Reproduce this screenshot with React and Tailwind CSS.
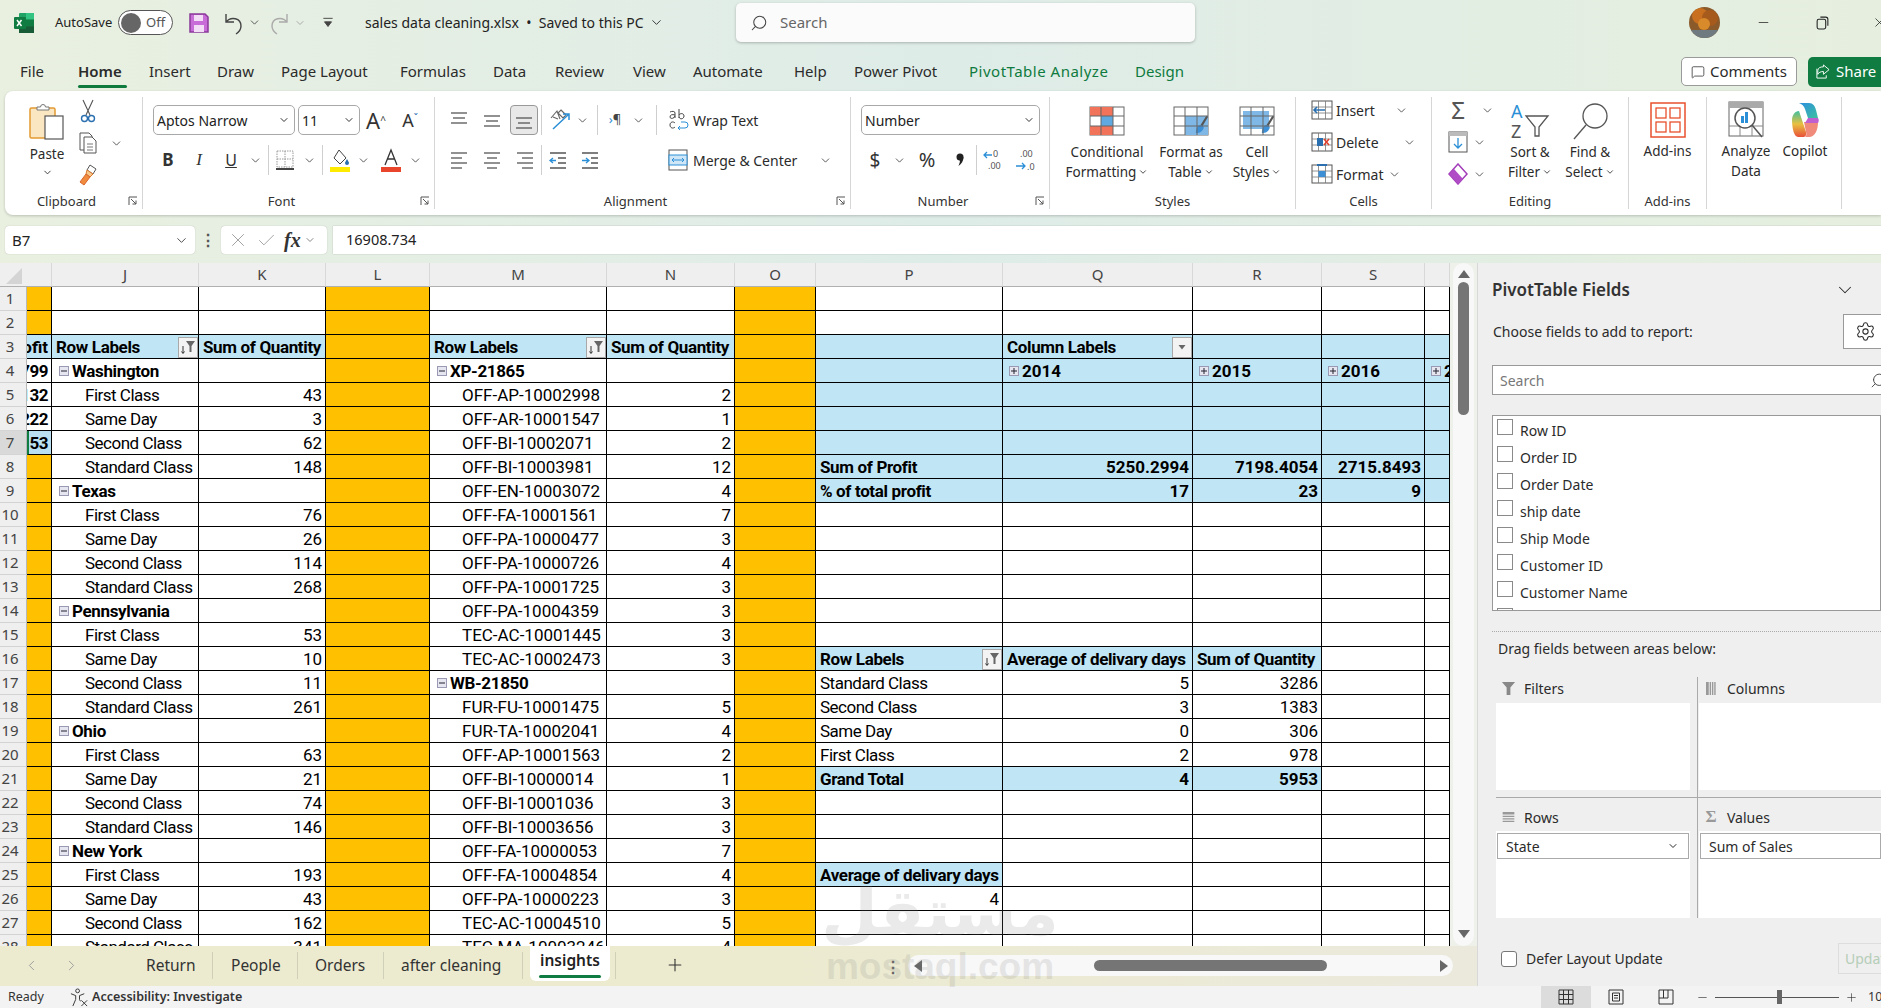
import {
  Check,
  ChevronDown,
  ChevronLeft,
  ChevronRight,
  Search,
  Settings,
  Minus,
  Plus,
  X,
  MessageSquare,
} from "lucide-react";

const sheetCols =
  "grid grid-cols-[27px_25px_147px_127px_104px_177px_128px_81px_187px_190px_129px_103px_25px]";
const headers = ["", "", "J", "K", "L", "M", "N", "O", "P", "Q", "R", "S", ""];

const BLUE = "bg-[#c0e6f5]";
const ORANGE = "bg-[#ffc000]";

const jk = {
  4: ["s", "Washington"],
  5: ["i", "First Class", 43],
  6: ["i", "Same Day", 3],
  7: ["i", "Second Class", 62],
  8: ["i", "Standard Class", 148],
  9: ["s", "Texas"],
  10: ["i", "First Class", 76],
  11: ["i", "Same Day", 26],
  12: ["i", "Second Class", 114],
  13: ["i", "Standard Class", 268],
  14: ["s", "Pennsylvania"],
  15: ["i", "First Class", 53],
  16: ["i", "Same Day", 10],
  17: ["i", "Second Class", 11],
  18: ["i", "Standard Class", 261],
  19: ["s", "Ohio"],
  20: ["i", "First Class", 63],
  21: ["i", "Same Day", 21],
  22: ["i", "Second Class", 74],
  23: ["i", "Standard Class", 146],
  24: ["s", "New York"],
  25: ["i", "First Class", 193],
  26: ["i", "Same Day", 43],
  27: ["i", "Second Class", 162],
  28: ["i", "Standard Class", 341],
};

const mn = {
  4: ["s", "XP-21865"],
  5: ["i", "OFF-AP-10002998", 2],
  6: ["i", "OFF-AR-10001547", 1],
  7: ["i", "OFF-BI-10002071", 2],
  8: ["i", "OFF-BI-10003981", 12],
  9: ["i", "OFF-EN-10003072", 4],
  10: ["i", "OFF-FA-10001561", 7],
  11: ["i", "OFF-PA-10000477", 3],
  12: ["i", "OFF-PA-10000726", 4],
  13: ["i", "OFF-PA-10001725", 3],
  14: ["i", "OFF-PA-10004359", 3],
  15: ["i", "TEC-AC-10001445", 3],
  16: ["i", "TEC-AC-10002473", 3],
  17: ["s", "WB-21850"],
  18: ["i", "FUR-FU-10001475", 5],
  19: ["i", "FUR-TA-10002041", 4],
  20: ["i", "OFF-AP-10001563", 2],
  21: ["i", "OFF-BI-10000014", 1],
  22: ["i", "OFF-BI-10001036", 3],
  23: ["i", "OFF-BI-10003656", 3],
  24: ["i", "OFF-FA-10000053", 7],
  25: ["i", "OFF-FA-10004854", 4],
  26: ["i", "OFF-PA-10000223", 3],
  27: ["i", "TEC-AC-10004510", 5],
  28: ["i", "TEC-MA-10003246", 4],
};

const shipTable = {
  17: ["Standard Class", 5, 3286],
  18: ["Second Class", 3, 1383],
  19: ["Same Day", 0, 306],
  20: ["First Class", 2, 978],
};

const Cell = ({ bg = "bg-white", bold, right, code, pl = "pl-[4px]", children, extra = "" }) => {
  const spacing = right || code ? "" : bold ? "tracking-[-0.35px]" : "tracking-[-0.5px]";
  return (
    <div
      className={`flex h-[24px] items-center overflow-hidden whitespace-nowrap border-r border-b border-black pt-[1px] text-[17px] leading-none ${bg} ${
        bold ? "font-bold" : ""
      } ${right ? "justify-end pr-[3px]" : pl} ${spacing} ${extra}`}
    >
      {children}
    </div>
  );
};

const Box = ({ plus }) => (
  <span className="mr-[3px] flex h-[10px] w-[10px] shrink-0 items-center justify-center border border-[#9a9ab4] bg-[#e6e6f0]">
    <svg viewBox="0 0 8 8" className="h-[8px] w-[8px]">
      <path d={plus ? "M1 4h6M4 1v6" : "M1 4h6"} stroke="#223" strokeWidth="1" />
    </svg>
  </span>
);

const FilterBtn = ({ sorted = true }) => (
  <span className="ml-auto flex h-[21px] w-[20px] shrink-0 items-center justify-center border border-[#a8a8a8] bg-[#f3f3f3]">
    {sorted ? (
      <svg viewBox="0 0 16 16" className="h-[16px] w-[16px]">
        <path d="M6 2h9l-3.500 5v6h-2V7z" fill="#666" />
        <path d="M3 7v7M1.500 12.500 3 14.500l1.500-2" stroke="#333" fill="none" />
      </svg>
    ) : (
      <svg viewBox="0 0 10 10" className="h-[10px] w-[10px]">
        <path d="M1.500 3h7L5 7.500z" fill="#666" />
      </svg>
    )}
  </span>
);

// only the right end of column I is on screen
const colI = (r) => {
  if (r === 3)
    return (
      <Cell bg={BLUE} bold right>
        ofit
      </Cell>
    );
  if (r === 4)
    return (
      <Cell bold right extra="tracking-[-0.5px]">
        799
      </Cell>
    );
  if (r === 5)
    return (
      <Cell bold right extra="tracking-[-0.5px]">
        132
      </Cell>
    );
  if (r === 6)
    return (
      <Cell bold right extra="tracking-[-0.5px]">
        222
      </Cell>
    );
  if (r === 7)
    return (
      <Cell bg="bg-[#b9dff0]" bold right extra="border-l-2 border-l-[#107c41] tracking-[-0.5px]">
        .53
      </Cell>
    );
  return <Cell bg={ORANGE} />;
};

const colJK = (r) => {
  if (r === 3)
    return [
      <Cell key="j" bg={BLUE} bold>
        Row Labels
        <FilterBtn />
      </Cell>,
      <Cell key="k" bg={BLUE} bold>
        Sum of Quantity
      </Cell>,
    ];
  const d = jk[r];
  if (!d) return [<Cell key="j" />, <Cell key="k" />];
  return [
    d[0] === "s" ? (
      <Cell key="j" bold pl="pl-[7px]">
        <Box />
        {d[1]}
      </Cell>
    ) : (
      <Cell key="j" pl="pl-[33px]">
        {d[1]}
      </Cell>
    ),
    <Cell key="k" right>
      {d[2]}
    </Cell>,
  ];
};

const colMN = (r) => {
  if (r === 3)
    return [
      <Cell key="m" bg={BLUE} bold>
        Row Labels
        <FilterBtn />
      </Cell>,
      <Cell key="n" bg={BLUE} bold>
        Sum of Quantity
      </Cell>,
    ];
  const d = mn[r];
  if (!d) return [<Cell key="m" />, <Cell key="n" />];
  return [
    d[0] === "s" ? (
      <Cell key="m" bold pl="pl-[7px]">
        <Box />
        {d[1]}
      </Cell>
    ) : (
      <Cell key="m" code pl="pl-[32px]">
        {d[1]}
      </Cell>
    ),
    <Cell key="n" right>
      {d[2]}
    </Cell>,
  ];
};

const colPT = (r) => {
  if (r === 3)
    return [
      <Cell key="p" bg={BLUE} />,
      <Cell key="q" bg={BLUE} bold>
        Column Labels
        <FilterBtn sorted={false} />
      </Cell>,
      <Cell key="r" bg={BLUE} />,
      <Cell key="s" bg={BLUE} />,
      <Cell key="t" bg={BLUE} />,
    ];
  if (r === 4)
    return [
      <Cell key="p" bg={BLUE} />,
      ...["2014", "2015", "2016", "2"].map((y) => (
        <Cell key={y} bg={BLUE} bold code pl="pl-[6px]">
          <Box plus />
          {y}
        </Cell>
      )),
    ];
  if (r >= 5 && r <= 7) return ["p", "q", "r", "s", "t"].map((k) => <Cell key={k} bg={BLUE} />);
  if (r === 8 || r === 9) {
    const vals = r === 8 ? ["5250.2994", "7198.4054", "2715.8493"] : [17, 23, 9];
    return [
      <Cell key="p" bg={BLUE} bold>
        {r === 8 ? "Sum of Profit" : "% of total profit"}
      </Cell>,
      ...vals.map((v, i) => (
        <Cell key={i} bg={BLUE} bold right>
          {v}
        </Cell>
      )),
      <Cell key="t" bg={BLUE} />,
    ];
  }
  if (r === 16)
    return [
      <Cell key="p" bg={BLUE} bold>
        Row Labels
        <FilterBtn />
      </Cell>,
      <Cell key="q" bg={BLUE} bold>
        Average of delivary days
      </Cell>,
      <Cell key="r" bg={BLUE} bold>
        Sum of Quantity
      </Cell>,
      <Cell key="s" />,
      <Cell key="t" />,
    ];
  if (shipTable[r]) {
    const d = shipTable[r];
    return [
      <Cell key="p">{d[0]}</Cell>,
      <Cell key="q" right>
        {d[1]}
      </Cell>,
      <Cell key="r" right>
        {d[2]}
      </Cell>,
      <Cell key="s" />,
      <Cell key="t" />,
    ];
  }
  if (r === 21)
    return [
      <Cell key="p" bg={BLUE} bold>
        Grand Total
      </Cell>,
      <Cell key="q" bg={BLUE} bold right>
        4
      </Cell>,
      <Cell key="r" bg={BLUE} bold right>
        5953
      </Cell>,
      <Cell key="s" />,
      <Cell key="t" />,
    ];
  if (r === 25)
    return [
      <Cell key="p" bg={BLUE} bold>
        Average of delivary days
      </Cell>,
      ...["q", "r", "s", "t"].map((k) => <Cell key={k} />),
    ];
  if (r === 26)
    return [
      <Cell key="p" right>
        4
      </Cell>,
      ...["q", "r", "s", "t"].map((k) => <Cell key={k} />),
    ];
  return ["p", "q", "r", "s", "t"].map((k) => <Cell key={k} />);
};

const Chev = ({ className = "" }) => (
  <ChevronDown size={13} strokeWidth={1.600} className={`shrink-0 text-[#444] ${className}`} />
);

const Slot = ({ w, children, className = "" }) => (
  <div className={`flex shrink-0 items-center justify-center ${w} ${className}`}>{children}</div>
);

const Lines = ({ rows, color = "#555" }) => (
  <svg viewBox="0 0 20 20" className="h-[20px] w-[20px]">
    {rows.map(([a, b, y], i) => (
      <path key={i} d={`M${a} ${y}H${b}`} stroke={color} strokeWidth="1.300" />
    ))}
  </svg>
);

const Launcher = () => (
  <svg viewBox="0 0 10 10" className="h-[10px] w-[10px] shrink-0">
    <path d="M1 9V1h8M3 3l5 5M8 4.500V8H4.500" stroke="#555" fill="none" strokeWidth="1" />
  </svg>
);

const Group = ({ w, label, launcher, children }) => (
  <div className={`flex h-[112px] shrink-0 flex-col border-r border-[#d6d6d6] ${w}`}>
    <div className="h-[96px] shrink-0">{children}</div>
    <div className="flex h-[16px] shrink-0 items-center">
      <div className="flex-1 text-center text-[13px] leading-[16px] text-[#333]">{label}</div>
      {launcher && (
        <div className="mr-[4px]">
          <Launcher />
        </div>
      )}
    </div>
  </div>
);

const Select = ({ w, children, className = "" }) => (
  <div
    className={`flex h-[30px] shrink-0 items-center justify-between rounded-[5px] border border-[#a8a8a8] bg-white pr-[4px] pl-[3px] text-[14px] text-[#222] ${w} ${className}`}
  >
    {children}
    <ChevronDown size={12} strokeWidth={2} className="text-[#333]" />
  </div>
);

const Sep = ({ className = "" }) => <div className={`h-[30px] w-px shrink-0 bg-[#cfcfcf] ${className}`} />;

const ExcelLogo = () => (
  <svg viewBox="0 0 22 22" className="h-[22px] w-[22px]">
    <rect x="6" y="1" width="15" height="20" rx="1" fill="#21a366" />
    <rect x="13" y="1" width="8" height="6.600" fill="#33c481" />
    <rect x="13" y="7.600" width="8" height="6.600" fill="#107c41" />
    <rect x="6" y="14.200" width="15" height="6.800" fill="#185c37" />
    <rect x="1" y="5" width="12" height="12" rx="1" fill="#107c41" />
    <path d="M4 8l4.500 6M8.500 8 4 14" stroke="#fff" strokeWidth="1.500" />
  </svg>
);

const PasteIcon = () => (
  <svg viewBox="0 0 36 38" className="h-[38px] w-[36px]">
    <rect x="1" y="6" width="25" height="30" rx="1.500" fill="#fbe6c2" stroke="#e39a32" strokeWidth="1.500" />
    <path d="M8 8V5h3.500a2.500 2.500 0 0 1 5 0H20v3z" fill="#fff" stroke="#777" />
    <rect x="16" y="14" width="18" height="23" fill="#fff" stroke="#555" strokeWidth="1.200" />
  </svg>
);

const GridIcon = ({ children }) => (
  <svg viewBox="0 0 36 30" className="h-[30px] w-[36px]">
    <rect x="1" y="1" width="34" height="28" fill="#fff" stroke="#666" />
    {children}
    <path d="M12 1v28M24 1v28M1 10h34M1 20h34" stroke="#666" />
  </svg>
);

const Brush = () => (
  <svg viewBox="0 0 16 22" x="22" y="8" width="14" height="22">
    <path d="M14 1 6 14" stroke="#555" strokeWidth="2.500" />
    <path d="M7 11c-4 0-6 4-6 9 5 1 9-3 9-7z" fill="#3d8fd6" />
  </svg>
);

const SmallGrid = ({ children }) => (
  <svg viewBox="0 0 22 20" className="h-[20px] w-[22px]">
    <rect x="1" y="1" width="20" height="18" fill="#fff" stroke="#555" />
    <path d="M7.500 1v18M14.500 1v18M1 7h20M1 13h20" stroke="#777" strokeWidth=".8" />
    {children}
  </svg>
);

const TitleBar = () => (
  <div className="flex h-[50px] items-center pb-[5px] text-[#222]">
    <div className="ml-[13px] w-[42px] shrink-0">
      <ExcelLogo />
    </div>
    <div className="w-[63px] shrink-0 text-[13px]">AutoSave</div>
    <div className="flex h-[25px] w-[55px] shrink-0 items-center rounded-full border border-[#555] bg-white pl-[2px]">
      <span className="h-[20px] w-[20px] rounded-full bg-[#666]" />
      <span className="ml-[5px] text-[13px] text-[#555]">Off</span>
    </div>
    <svg viewBox="0 0 22 22" className="ml-[15px] h-[22px] w-[22px] shrink-0">
      <path d="M2 2h15l3 3v15H2z" fill="#c86dd7" stroke="#8a3a9a" strokeWidth="1.500" />
      <rect x="6" y="3" width="9" height="6" fill="#f2dcf6" />
      <rect x="6" y="13" width="10" height="7" fill="#f2dcf6" />
    </svg>
    <svg viewBox="0 0 22 24" className="ml-[13px] h-[24px] w-[22px] shrink-0">
      <path d="M3 3v8h8M3 11c5-6 15-4 15 4 0 3-2 6-5 8" stroke="#444" fill="none" strokeWidth="1.400" />
    </svg>
    <Chev className="ml-[3px]" />
    <svg viewBox="0 0 22 24" className="ml-[7px] h-[24px] w-[22px] shrink-0">
      <path d="M19 3v8h-8M19 11C14 5 4 7 4 15c0 3 2 6 5 8" stroke="#aaa" fill="none" strokeWidth="1.400" />
    </svg>
    <ChevronDown size={12} className="ml-[4px] shrink-0 text-[#aaa]" />
    <svg viewBox="0 0 12 12" className="ml-[15px] h-[14px] w-[14px] shrink-0">
      <path d="M2 2h8M3 5h6l-3 4z" stroke="#444" fill="#444" strokeWidth=".8" />
    </svg>
    <div className="ml-[30px] flex w-[371px] shrink-0 items-center text-[14px]">
      sales data cleaning.xlsx &nbsp;•&nbsp; Saved to this PC
      <ChevronDown size={15} strokeWidth={1.400} className="ml-[5px]" />
    </div>
    <div className="flex h-[39px] w-[459px] shrink-0 items-center rounded-[5px] bg-[#fbfbfb] pl-[14px] text-[15px] text-[#666] shadow-[0_1px_3px_rgba(0,0,0,0.25)]">
      <Search size={18} strokeWidth={1.400} className="-scale-x-100 text-[#444]" />
      <span className="ml-[12px]">Search</span>
    </div>
    <div className="ml-[494px] flex h-[31px] w-[31px] shrink-0 items-center justify-center overflow-hidden rounded-full">
      <svg viewBox="0 0 31 31" className="h-[31px] w-[31px]">
        <rect width="31" height="31" fill="#8a5a2a" />
        <circle cx="11" cy="9" r="8" fill="#c8701f" />
        <circle cx="21" cy="11" r="8" fill="#a65a1c" />
        <circle cx="15" cy="17" r="6" fill="#d98a2b" />
        <rect y="23" width="31" height="8" fill="#6f7a80" />
      </svg>
    </div>
    <Minus size={15} strokeWidth={1.200} className="ml-[36px] shrink-0 text-[#222]" />
    <svg viewBox="0 0 14 14" className="ml-[44px] h-[15px] w-[15px] shrink-0">
      <rect x="2" y="4" width="8" height="9" rx="1.500" fill="none" stroke="#222" />
      <path d="M5 2h5a2 2 0 0 1 2 2v6" fill="none" stroke="#222" />
    </svg>
    <X size={15} strokeWidth={1.200} className="ml-[42px] shrink-0 text-[#222]" />
  </div>
);

const menu = [
  ["File", "w-[58px]"],
  ["Home", "w-[71px] font-semibold"],
  ["Insert", "w-[68px]"],
  ["Draw", "w-[64px]"],
  ["Page Layout", "w-[119px]"],
  ["Formulas", "w-[93px]"],
  ["Data", "w-[62px]"],
  ["Review", "w-[78px]"],
  ["View", "w-[60px]"],
  ["Automate", "w-[101px]"],
  ["Help", "w-[60px]"],
  ["Power Pivot", "w-[115px]"],
  ["PivotTable Analyze", "w-[166px] text-[#0e7a3e] tracking-[0.5px]"],
  ["Design", "w-[60px] text-[#0e7a3e]"],
];

const MenuBar = () => (
  <div className="flex h-[41px] items-center pt-[2px] text-[15px] text-[#2b2b2b]">
    <div className="ml-[20px] flex shrink-0">
      {menu.map(([t, c]) => (
        <div key={t} className={`relative whitespace-nowrap ${c}`}>
          {t}
          {t === "Home" && (
            <span className="absolute top-[25px] left-0 h-[3px] w-[49px] rounded-full bg-[#0e7a3e]" />
          )}
        </div>
      ))}
    </div>
    <div className="ml-[486px] flex h-[29px] w-[116px] shrink-0 items-center justify-center gap-[5px] rounded-[5px] border border-[#9a9a9a] bg-white text-[15px]">
      <MessageSquare size={14} strokeWidth={1.300} />
      Comments
    </div>
    <div className="ml-[11px] flex h-[30px] w-[80px] shrink-0 items-center gap-[6px] rounded-[5px] bg-[#107c41] pl-[7px] text-[15px] text-white">
      <svg viewBox="0 0 16 16" className="h-[15px] w-[15px]">
        <path d="M9 1l6 5-6 5V8C6 8 4 9 3 11V7c0-3 3-4 6-4zM2 5v10h10v-3" fill="none" stroke="#fff" />
      </svg>
      Share
    </div>
  </div>
);

const RibbonBtn = ({ w, icon, lines, ml = "" }) => (
  <div className={`flex shrink-0 flex-col items-center ${w} ${ml}`}>
    <div className="flex h-[38px] items-center">{icon}</div>
    <div className="mt-[2px] text-center text-[13.500px] leading-[20px] whitespace-nowrap text-[#2b2b2b]">
      {lines.map((l, i) => (
        <div key={i} className="flex items-center justify-center gap-[2px]">
          {l}
          {l.endsWith(" ") && <ChevronDown size={10} strokeWidth={2} />}
        </div>
      ))}
    </div>
  </div>
);

const Ribbon = () => (
  <div className="ml-[5px] flex h-[124px] rounded-l-[8px] bg-white pt-[6px] shadow-[0_1px_3px_rgba(0,0,0,0.2)]">
    <Group w="w-[138px]" label="Clipboard" launcher>
      <div className="flex pt-[5px]">
        <div className="ml-[13px] flex w-[58px] flex-col items-center">
          <PasteIcon />
          <div className="mt-[4px] text-[13.500px] leading-[20px] text-[#2b2b2b]">Paste</div>
          <ChevronDown size={11} strokeWidth={2} className="mt-[3px] text-[#333]" />
        </div>
        <div className="-mt-[4px] flex flex-col gap-[6px]">
          <Slot w="w-[24px] h-[26px]">
            <svg viewBox="0 0 16 24" className="h-[24px] w-[16px]">
              <path d="M3 1l7 15M13 1 6 16" stroke="#555" strokeWidth="1.100" fill="none" />
              <circle cx="4.500" cy="19.500" r="3" fill="none" stroke="#2a6fb0" strokeWidth="1.400" />
              <circle cx="11.500" cy="19.500" r="3" fill="none" stroke="#2a6fb0" strokeWidth="1.400" />
            </svg>
          </Slot>
          <div className="flex h-[26px] items-center">
            <Slot w="w-[24px]">
              <svg viewBox="0 0 18 22" className="h-[22px] w-[18px]">
                <path d="M1 1h9l3 3v14H1z" fill="#fff" stroke="#555" />
                <path d="M5 5h8l4 4v12H5z" fill="#fff" stroke="#555" />
                <path d="M8 12h6M8 15h6M8 18h6" stroke="#777" />
              </svg>
            </Slot>
            <Chev className="ml-[10px]" />
          </div>
          <Slot w="w-[24px] h-[26px]">
            <svg viewBox="0 0 20 24" className="h-[24px] w-[20px]">
              <path d="M12 2l6 4-3 5-6-4z" fill="#fff" stroke="#555" />
              <path d="M9 7l6 4-3 3-4-3z" fill="#f5c78a" stroke="#d97a2b" />
              <path d="M8 11l4 3-6 8-4-3z" fill="#f08a3c" stroke="#d9662b" />
            </svg>
          </Slot>
        </div>
      </div>
    </Group>

    <Group w="w-[292px]" label="Font" launcher>
      <div className="flex items-center pt-[8px]">
        <Select w="w-[142px]" className="ml-[10px]">
          Aptos Narrow
        </Select>
        <Select w="w-[62px]" className="ml-[3px]">
          11
        </Select>
        <Slot w="w-[32px]">
          <span className="text-[22px] leading-none text-[#333]">
            A<sup className="text-[10px] text-[#333]">^</sup>
          </span>
        </Slot>
        <Slot w="w-[32px]" className="ml-[2px]">
          <span className="text-[18px] leading-none text-[#333]">
            A<sup className="text-[10px] text-[#2a6fb0]">ˇ</sup>
          </span>
        </Slot>
      </div>
      <div className="mt-[10px] flex h-[30px] items-center text-[#333]">
        <Slot w="w-[30px] ml-[10px] font-bold text-[17px]">B</Slot>
        <Slot w="w-[32px] italic text-[17px] font-['Liberation_Serif',serif]">I</Slot>
        <Slot w="w-[32px] underline text-[16px]">U</Slot>
        <Slot w="w-[16px]">
          <Chev />
        </Slot>
        <Sep className="ml-[5px]" />
        <Slot w="w-[32px]">
          <svg viewBox="0 0 20 22" className="h-[22px] w-[20px]">
            <path d="M2 2h16v16H2zM10 2v16M2 10h16" fill="none" stroke="#999" strokeDasharray="1.500 1" />
            <path d="M1 20h18" stroke="#444" strokeWidth="2" />
          </svg>
        </Slot>
        <Slot w="w-[16px]">
          <Chev />
        </Slot>
        <Sep className="ml-[5px]" />
        <Slot w="w-[34px]">
          <svg viewBox="0 0 22 24" className="h-[24px] w-[22px]">
            <path d="M10 2l7 8-6 6-6-6z" fill="#fff" stroke="#444" />
            <path d="M18 11c1 2 2 3 2 4a2 2 0 0 1-4 0c0-1 1-2 2-4z" fill="#2a6fb0" />
            <rect x="1" y="19" width="20" height="5" fill="#ffeb00" />
          </svg>
        </Slot>
        <Slot w="w-[12px]">
          <Chev />
        </Slot>
        <Slot w="w-[36px] ml-[4px]">
          <svg viewBox="0 0 22 24" className="h-[24px] w-[22px]">
            <path d="M5 17 11 2l6 15M7.500 11h7" stroke="#333" fill="none" strokeWidth="1.300" />
            <rect x="1" y="19" width="20" height="5" fill="#e8452c" />
          </svg>
        </Slot>
        <Slot w="w-[12px]">
          <Chev />
        </Slot>
      </div>
    </Group>

    <Group w="w-[416px]" label="Alignment" launcher>
      <div className="mt-[8px] flex h-[30px] items-center">
        <Slot w="w-[32px] ml-[8px]">
          <Lines rows={[[2, 18, 3], [4, 16, 8], [2, 18, 13]]} />
        </Slot>
        <Slot w="w-[33px]">
          <Lines rows={[[2, 18, 6], [4, 16, 11], [2, 18, 16]]} />
        </Slot>
        <Slot w="w-[28px] h-[30px] ml-[2px] rounded-[4px] border border-[#999] bg-[#e8e8e8]">
          <Lines rows={[[2, 18, 8], [4, 16, 13], [2, 18, 18]]} />
        </Slot>
        <Sep className="ml-[3px]" />
        <Slot w="w-[36px]">
          <svg viewBox="0 0 24 24" className="h-[24px] w-[24px]">
            <path d="M3 10 9 3l3 8M5 9l5 2M13 2l5 5-3 3-5-5z" stroke="#666" fill="none" strokeWidth="1.100" />
            <path d="M5 21 21 6M15 6h6v6" stroke="#2a8fd6" fill="none" strokeWidth="1.500" />
          </svg>
        </Slot>
        <Slot w="w-[8px]">
          <Chev />
        </Slot>
        <Sep className="ml-[11px]" />
        <Slot w="w-[34px] text-[13px] text-[#444]">
          <span className="text-[#2a8fd6]">›</span>¶
        </Slot>
        <Slot w="w-[12px]">
          <Chev />
        </Slot>
        <Sep className="ml-[12px]" />
        <Slot w="w-[28px] ml-[7px]">
          <svg viewBox="0 0 22 24" className="h-[24px] w-[22px]">
            <path d="M3 4c2-1 5-1 5 1v5M8 7C5 6 3 7 3 9s4 2 5-1M12 1v9M12 7c1-2 5-2 5 1s-4 4-5 1M8 15c-2-2-5-1-5 2s3 4 5 2" stroke="#444" fill="none" />
            <path d="M11 20h7a2.500 2.500 0 0 0 0-6h-4M13 18l-2 2 2 2" stroke="#2a8fd6" fill="none" />
          </svg>
        </Slot>
        <span className="ml-[1px] shrink-0 text-[14px] text-[#2b2b2b]">Wrap Text</span>
      </div>
      <div className="mt-[10px] flex h-[30px] items-center">
        <Slot w="w-[32px] ml-[8px]">
          <Lines rows={[[2, 18, 3], [2, 13, 8], [2, 18, 13], [2, 13, 18]]} />
        </Slot>
        <Slot w="w-[33px]">
          <Lines rows={[[2, 18, 3], [5, 15, 8], [2, 18, 13], [5, 15, 18]]} />
        </Slot>
        <Slot w="w-[33px]">
          <Lines rows={[[2, 18, 3], [7, 18, 8], [2, 18, 13], [7, 18, 18]]} />
        </Slot>
        <Sep />
        <Slot w="w-[32px]">
          <svg viewBox="0 0 20 20" className="h-[20px] w-[20px]">
            <path d="M2 3h16M10 8h8M10 13h8M2 18h16" stroke="#555" strokeWidth="1.300" />
            <path d="M8 10.500H2M5 8l-3 2.500L5 13" stroke="#2a8fd6" fill="none" strokeWidth="1.300" />
          </svg>
        </Slot>
        <Slot w="w-[32px]">
          <svg viewBox="0 0 20 20" className="h-[20px] w-[20px]">
            <path d="M2 3h16M11 8h7M11 13h7M2 18h16" stroke="#555" strokeWidth="1.300" />
            <path d="M2 10.500h7M6 8l3 2.500L6 13" stroke="#2a8fd6" fill="none" strokeWidth="1.300" />
          </svg>
        </Slot>
        <Slot w="w-[25px] ml-[59px]">
          <svg viewBox="0 0 20 22" className="h-[22px] w-[20px]">
            <rect x="1" y="1" width="18" height="20" fill="#fff" stroke="#555" />
            <rect x="1" y="6" width="18" height="10" fill="#cfe6f7" stroke="#2a8fd6" />
            <path d="M4 11h12M6 9l-2 2 2 2M14 9l2 2-2 2" stroke="#2a8fd6" fill="none" />
          </svg>
        </Slot>
        <span className="ml-[3px] w-[120px] shrink-0 text-[14px] text-[#2b2b2b]">Merge &amp; Center</span>
        <Slot w="w-[24px]">
          <Chev />
        </Slot>
      </div>
    </Group>

    <Group w="w-[199px]" label="Number" launcher>
      <div className="pt-[8px]">
        <Select w="w-[179px]" className="ml-[10px]">
          Number
        </Select>
      </div>
      <div className="mt-[10px] flex h-[30px] items-center text-[#333]">
        <Slot w="w-[32px] ml-[8px] text-[19px]">$</Slot>
        <Slot w="w-[16px]">
          <Chev />
        </Slot>
        <Slot w="w-[40px] text-[20px]">%</Slot>
        <Slot w="w-[26px]">
          <svg viewBox="0 0 8 14" className="h-[14px] w-[8px]">
            <circle cx="4" cy="4" r="3.500" fill="#222" />
            <path d="M7.500 4c0 4-2 7-5 9 1-3 2-5 1-6z" fill="#222" />
          </svg>
        </Slot>
        <Sep className="ml-[3px]" />
        <Slot w="w-[32px]">
          <svg viewBox="0 0 24 24" className="h-[24px] w-[24px]">
            <text x="12" y="9" fontSize="9" fill="#555" fontFamily="Noto Sans">
              0
            </text>
            <text x="7" y="21" fontSize="9" fill="#555" fontFamily="Noto Sans">
              .00
            </text>
            <path d="M11 7H3M6 4 3 7l3 3" stroke="#2a8fd6" fill="none" strokeWidth="1.300" />
          </svg>
        </Slot>
        <Slot w="w-[32px]">
          <svg viewBox="0 0 24 24" className="h-[24px] w-[24px]">
            <text x="7" y="9" fontSize="9" fill="#555" fontFamily="Noto Sans">
              .00
            </text>
            <text x="14" y="22" fontSize="9" fill="#555" fontFamily="Noto Sans">
              .0
            </text>
            <path d="M3 18h9M9 15l3 3-3 3" stroke="#2a8fd6" fill="none" strokeWidth="1.300" />
          </svg>
        </Slot>
      </div>
    </Group>

    <Group w="w-[246px]" label="Styles">
      <div className="flex pt-[5px]">
        <RibbonBtn
          w="w-[108px]"
          ml="ml-[3px]"
          lines={["Conditional", "Formatting "]}
          icon={
            <GridIcon>
              <rect x="1" y="1" width="23" height="9" fill="#f0735a" />
              <rect x="12" y="10" width="12" height="10" fill="#5fa8e0" />
              <rect x="1" y="20" width="23" height="9" fill="#f0735a" />
            </GridIcon>
          }
        />
        <RibbonBtn
          w="w-[60px]"
          lines={["Format as", "Table "]}
          icon={
            <GridIcon>
              <rect x="12" y="10" width="23" height="19" fill="#7fb8e6" />
              <Brush />
            </GridIcon>
          }
        />
        <RibbonBtn
          w="w-[72px]"
          lines={["Cell", "Styles "]}
          icon={
            <GridIcon>
              <rect x="4" y="5" width="26" height="18" fill="#7fb8e6" />
              <Brush />
            </GridIcon>
          }
        />
      </div>
    </Group>

    <Group w="w-[136px]" label="Cells">
      <div className="-mt-[3px] text-[14px] text-[#2b2b2b]">
        <div className="flex h-[32px] items-center">
          <Slot w="w-[24px] ml-[14px]">
            <SmallGrid>
              <path d="M14 10H3M6 7l-3 3 3 3" stroke="#2a6fb0" fill="none" strokeWidth="1.600" />
            </SmallGrid>
          </Slot>
          <span className="ml-[2px] w-[59px] shrink-0">Insert</span>
          <Chev />
        </div>
        <div className="flex h-[32px] items-center">
          <Slot w="w-[24px] ml-[14px]">
            <SmallGrid>
              <rect x="6" y="6" width="6" height="8" fill="#2a6fb0" />
              <path d="M13 7l5 6M18 7l-5 6" stroke="#e0402c" strokeWidth="1.500" />
            </SmallGrid>
          </Slot>
          <span className="ml-[2px] w-[67px] shrink-0">Delete</span>
          <Chev />
        </div>
        <div className="flex h-[32px] items-center">
          <Slot w="w-[24px] ml-[14px]">
            <SmallGrid>
              <rect x="7.500" y="7" width="7" height="6" fill="#3d8fd6" />
              <path d="M6 1h10" stroke="#2a6fb0" strokeWidth="2" />
            </SmallGrid>
          </Slot>
          <span className="ml-[2px] w-[52px] shrink-0">Format</span>
          <Chev />
        </div>
      </div>
    </Group>

    <Group w="w-[197px]" label="Editing">
      <div className="flex">
        <div className="-mt-[3px] w-[68px] shrink-0">
          <div className="flex h-[32px] items-center">
            <Slot w="w-[26px] ml-[13px] text-[24px] leading-none text-[#555]">Σ</Slot>
            <Chev className="ml-[10px]" />
          </div>
          <div className="flex h-[32px] items-center">
            <Slot w="w-[26px] ml-[13px]">
              <svg viewBox="0 0 20 22" className="h-[22px] w-[20px]">
                <rect x="1" y="1" width="18" height="20" fill="#fff" stroke="#555" />
                <rect x="1" y="1" width="18" height="4" fill="#bbb" />
                <path d="M10 7v10M6 13l4 4 4-4" stroke="#2a8fd6" fill="none" strokeWidth="1.300" />
              </svg>
            </Slot>
            <Chev className="ml-[2px]" />
          </div>
          <div className="flex h-[32px] items-center">
            <Slot w="w-[26px] ml-[13px]">
              <svg viewBox="0 0 20 22" className="h-[22px] w-[20px]">
                <path d="M10 1l9 10-9 10-9-10z" fill="#fff" stroke="#a23cb8" strokeWidth="1.500" />
                <path d="M1 11l5-5 9 10-5 5z" fill="#b04cc6" />
              </svg>
            </Slot>
            <Chev className="ml-[2px]" />
          </div>
        </div>
        <div className="flex pt-[5px]">
          <RibbonBtn
            w="w-[60px]"
            lines={["Sort &", "Filter "]}
            icon={
              <svg viewBox="0 0 40 38" className="h-[38px] w-[40px]">
                <text x="1" y="16" fontSize="18" fill="#2a8fd6" fontFamily="Noto Sans">
                  A
                </text>
                <text x="1" y="36" fontSize="18" fill="#555" fontFamily="Noto Sans">
                  Z
                </text>
                <path d="M16 14h22l-9 11v9h-4V25z" fill="#fff" stroke="#555" strokeWidth="1.300" />
              </svg>
            }
          />
          <RibbonBtn
            w="w-[60px]"
            lines={["Find &", "Select "]}
            icon={
              <svg viewBox="0 0 38 38" className="h-[38px] w-[38px]">
                <circle cx="24" cy="14" r="12" fill="#fff" stroke="#555" strokeWidth="1.300" />
                <path d="M15 23 3 37" stroke="#555" strokeWidth="1.300" />
              </svg>
            }
          />
        </div>
      </div>
    </Group>

    <Group w="w-[78px]" label="Add-ins">
      <div className="flex justify-center pt-[4px]">
        <RibbonBtn
          w="w-[70px]"
          lines={["Add-ins"]}
          icon={
            <svg viewBox="0 0 36 36" className="h-[36px] w-[36px]">
              <rect x="1" y="1" width="34" height="34" fill="#fff" stroke="#e8502f" strokeWidth="1.500" />
              <rect x="6" y="6" width="10" height="10" fill="none" stroke="#e8502f" strokeWidth="1.300" />
              <rect x="20" y="6" width="10" height="10" fill="none" stroke="#e8502f" strokeWidth="1.300" />
              <rect x="6" y="20" width="10" height="10" fill="none" stroke="#e8502f" strokeWidth="1.300" />
              <rect x="20" y="20" width="10" height="10" fill="none" stroke="#e8502f" strokeWidth="1.300" />
            </svg>
          }
        />
      </div>
    </Group>

    <Group w="w-[135px]" label="">
      <div className="flex pt-[4px]">
        <RibbonBtn
          w="w-[62px]"
          ml="ml-[8px]"
          lines={["Analyze", "Data"]}
          icon={
            <svg viewBox="0 0 36 38" className="h-[38px] w-[36px]">
              <rect x="1" y="1" width="34" height="34" fill="#fff" stroke="#666" />
              <rect x="1" y="1" width="34" height="6" fill="#aaa" />
              <path d="M1 25h34M12 25v10M24 25v10" stroke="#888" />
              <circle cx="17" cy="17" r="10" fill="#fff" stroke="#555" strokeWidth="1.500" />
              <rect x="13" y="15" width="3" height="7" fill="#2a8fd6" />
              <rect x="17" y="11" width="3" height="11" fill="#2a8fd6" />
              <path d="M24 24l10 12" stroke="#555" strokeWidth="1.500" />
            </svg>
          }
        />
        <RibbonBtn
          w="w-[56px]"
          lines={["Copilot"]}
          icon={
            <svg viewBox="0 0 30 36" className="h-[36px] w-[30px]">
              <defs>
                <linearGradient id="cpa" x1="0" y1="0" x2="1" y2="1">
                  <stop offset="0" stopColor="#2a8fe0" />
                  <stop offset="1" stopColor="#3fc0a0" />
                </linearGradient>
                <linearGradient id="cpb" x1="0" y1="0" x2="0" y2="1">
                  <stop offset="0" stopColor="#3fc0a0" />
                  <stop offset=".5" stopColor="#e8c040" />
                  <stop offset="1" stopColor="#e8503a" />
                </linearGradient>
              </defs>
              <path d="M9 1h10c4 0 6 3 7 7l2 8H18l-3-9c-1-3-3-5-6-6z" fill="url(#cpa)" />
              <path d="M2 18c0-5 3-9 7-9l4 12 3 9c1 3-1 5-3 5H8c-4 0-6-9-6-17z" fill="url(#cpb)" />
              <path d="M14 20h14c0 8-3 15-9 15h-5c2 0 3-2 2-5z" fill="#f08a7a" />
              <path d="M18 16h10c1 2 1 3 0 5H15z" fill="#c060d0" />
            </svg>
          }
        />
      </div>
    </Group>
  </div>
);

const FormulaBar = () => (
  <div className="mt-[11px] flex h-[28px] items-stretch text-[#222]">
    <div className="ml-[5px] flex w-[190px] items-center justify-between rounded-[4px] bg-white pr-[6px] pl-[7px] text-[15px] shadow-[0_0_1px_rgba(0,0,0,0.3)]">
      B7
      <ChevronDown size={15} strokeWidth={1.500} className="text-[#444]" />
    </div>
    <div className="flex w-[26px] items-center justify-center text-[16px] font-bold text-[#555]">⋮</div>
    <div className="flex w-[106px] items-center rounded-[4px] bg-white pl-[6px] shadow-[0_0_1px_rgba(0,0,0,0.3)]">
      <X size={22} strokeWidth={1} className="mr-[7px] text-[#999]" />
      <Check size={21} strokeWidth={1} className="mr-[7px] text-[#999]" />
      <span className="font-['Liberation_Serif',serif] text-[20px] font-bold text-[#333] italic">fx</span>
      <ChevronDown size={12} className="ml-[3px] text-[#888]" />
    </div>
    <div className="ml-[6px] flex flex-1 items-center bg-white pl-[13px] text-[14.500px] shadow-[0_0_1px_rgba(0,0,0,0.3)]">
      16908.734
    </div>
  </div>
);

const Sheet = () => (
  <div className="h-[683px] w-[1450px] shrink-0 overflow-hidden font-['Roboto',sans-serif] text-black">
    <div className={`${sheetCols} h-[24px]`}>
      {headers.map((h, i) => (
        <div
          key={i}
          className={`flex h-[24px] items-center justify-center border-b border-[#b0b0b0] bg-[#efefef] font-['Noto_Sans',sans-serif] text-[15px] text-[#444] ${
            i === 0 ? "" : "border-r border-r-[#d8d8d8]"
          }`}
        >
          {i === 0 ? (
            <svg viewBox="0 0 16 16" className="mt-[2px] h-[16px] w-[16px]">
              <path d="M16 0v16H0z" fill="#d4d4d4" />
            </svg>
          ) : (
            h
          )}
        </div>
      ))}
    </div>
    <div className={`${sheetCols} auto-rows-[24px]`}>
      {Array.from({ length: 28 }, (_, k) => k + 1).map((r) => (
        <div key={r} className="contents">
          <div
            className={`flex h-[24px] items-center justify-center border-r border-b border-[#d4d4d4] border-r-[#b8b8b8] pr-[6px] font-['Noto_Sans',sans-serif] text-[15px] text-[#444] ${
              r === 7 ? "bg-[#d9d9d9]" : "bg-[#efefef]"
            }`}
          >
            {r}
          </div>
          {colI(r)}
          {colJK(r)}
          <Cell bg={ORANGE} />
          {colMN(r)}
          <Cell bg={ORANGE} />
          {colPT(r)}
        </div>
      ))}
    </div>
  </div>
);

const VScroll = () => (
  <div className="flex h-[683px] w-[27px] shrink-0 justify-center bg-[#eef1ea]">
    <div className="flex h-[683px] w-[21px] flex-col items-center rounded-full bg-[#f8f8f8] pt-[7px]">
      <svg viewBox="0 0 12 8" className="h-[8px] w-[12px]">
        <path d="M6 0l6 8H0z" fill="#666" />
      </svg>
      <div className="mt-[4px] h-[133px] w-[11px] rounded-full bg-[#757575]" />
      <svg viewBox="0 0 12 8" className="mt-auto mb-[8px] h-[8px] w-[12px]">
        <path d="M6 8l6-8H0z" fill="#666" />
      </svg>
    </div>
  </div>
);

const tabs = [
  ["Return", "w-[67px]", ""],
  ["People", "w-[67px]", "ml-[18px]"],
  ["Orders", "w-[69px]", "ml-[17px]"],
  ["after cleaning", "w-[122px]", "ml-[17px]"],
];

const TabBar = () => (
  <div className="flex h-[40px] items-start bg-gradient-to-r from-[#ecebcf] via-[#ecebcf] to-[#ebe9dc] text-[15.500px] text-[#333]">
    <div className="flex h-[39px] w-[146px] shrink-0 items-center pl-[23px] text-[#999]">
      <ChevronLeft size={17} strokeWidth={1.300} />
      <ChevronRight size={17} strokeWidth={1.300} className="ml-[23px]" />
    </div>
    {tabs.map(([t, w, ml]) => (
      <div key={t} className={`mt-[6px] flex h-[27px] shrink-0 items-center border-r border-[#d0d0b8] whitespace-nowrap ${w} ${ml}`}>
        {t}
      </div>
    ))}
    <div className="ml-[7px] flex h-[35px] w-[80px] shrink-0 flex-col items-center rounded-b-[6px] bg-white pt-[3px] font-semibold text-[#222]">
      insights
      <span className="mt-[3px] h-[3px] w-[62px] rounded-full bg-[#107c41]" />
    </div>
    <div className="mt-[6px] ml-[5px] h-[27px] w-px shrink-0 bg-[#d0d0b8]" />
    <Plus size={20} strokeWidth={1.300} className="mt-[9px] ml-[49px] shrink-0 text-[#333]" />
    <div className="mt-[9px] ml-[200px] w-[8px] shrink-0 text-[16px] font-bold text-[#666]">⋮</div>
    <div className="mt-[9px] ml-[15px] flex h-[21px] w-[545px] shrink-0 items-center rounded-full bg-[#f8f8f8] pr-[5px] pl-[6px]">
      <svg viewBox="0 0 8 12" className="h-[12px] w-[8px]">
        <path d="M0 6l8-6v12z" fill="#666" />
      </svg>
      <div className="ml-[172px] h-[11px] w-[233px] rounded-full bg-[#757575]" />
      <svg viewBox="0 0 8 12" className="ml-auto h-[12px] w-[8px]">
        <path d="M8 6 0 0v12z" fill="#666" />
      </svg>
    </div>
  </div>
);

const fields = ["Row ID", "Order ID", "Order Date", "ship date", "Ship Mode", "Customer ID", "Customer Name"];

const AreaHead = ({ icon, label, className = "" }) => (
  <div className={`flex h-[26px] items-center ${className}`}>
    <div className="flex w-[24px] justify-center">{icon}</div>
    <span className="ml-[4px]">{label}</span>
  </div>
);

const PivotPane = () => (
  <div className="h-[723px] flex-1 overflow-hidden border-l border-[#d8d8d8] bg-[#efefef] pl-[14px] text-[14px] text-[#2b2b2b]">
    <div className="flex h-[51px] items-center pt-[2px]">
      <span className="w-[205px] shrink-0 text-[17px] font-semibold text-[#333]">PivotTable Fields</span>
      <ChevronDown size={22} strokeWidth={1.100} className="ml-[137px] shrink-0" />
      <X size={15} strokeWidth={1.300} className="ml-[24px] shrink-0" />
    </div>
    <div className="flex h-[35px] items-center">
      <span className="ml-[1px] w-[350px] shrink-0">Choose fields to add to report:</span>
      <div className="flex h-[35px] w-[60px] shrink-0 items-center border border-[#999] bg-white pl-[11px]">
        <Settings size={21} strokeWidth={1.200} />
      </div>
    </div>
    <div className="mt-[16px] flex h-[30px] w-[400px] items-center border border-[#999] bg-white pl-[7px] text-[#777]">
      Search
      <Search size={17} strokeWidth={1.300} className="mr-[4px] ml-auto -scale-x-100 text-[#444]" />
    </div>
    <div className="mt-[20px] h-[196px] overflow-hidden border border-[#999] bg-white pt-[3px] pl-[4px]">
      {[...fields, ""].map((f, i) => (
        <div key={i} className="flex h-[27px] items-start">
          <span className="h-[16px] w-[16px] shrink-0 border border-[#8a8a8a] bg-white" />
          <span className="mt-[1px] ml-[7px]">{f}</span>
        </div>
      ))}
    </div>
    <div className="mt-[20px] border-t border-dotted border-[#aaa] pt-[6px] pl-[6px]">Drag fields between areas below:</div>
    <div className="mt-[18px] ml-[4px] flex h-[120px]">
      <div className="w-[202px] shrink-0 border-r border-[#aaa] pr-[7px]">
        <AreaHead
          className="pb-[4px]"
          label="Filters"
          icon={
            <svg viewBox="0 0 16 16" className="h-[15px] w-[15px]">
              <path d="M1 1h14l-5 6v8H6V7z" fill="#888" />
            </svg>
          }
        />
        <div className="h-[87px] bg-white" />
      </div>
      <div className="ml-[1px] flex-1">
        <AreaHead
          className="pb-[4px]"
          label="Columns"
          icon={
            <svg viewBox="0 0 12 14" className="h-[13px] w-[11px]">
              <path d="M0 0h3v14H0zM4 0h1.500v14H4zM6.500 0H8v14H6.500zM9 0h1.500v14H9z" fill="#999" />
            </svg>
          }
        />
        <div className="h-[87px] bg-white" />
      </div>
    </div>
    <div className="ml-[4px] flex h-[121px] border-t border-[#aaa]">
      <div className="w-[202px] shrink-0 border-r border-[#aaa] pt-[7px] pr-[7px]">
        <AreaHead
          className="pb-[2px]"
          label="Rows"
          icon={
            <svg viewBox="0 0 14 12" className="h-[10px] w-[13px]">
              <path d="M0 0h14v3H0zM0 4.500h14V6H0zM0 7.500h14V9H0zM0 10.500h14V12H0z" fill="#999" />
            </svg>
          }
        />
        <div className="h-[87px] bg-white pt-[2px] pl-[1px]">
          <div className="flex h-[26px] w-[192px] items-center justify-between border border-[#aaa] pr-[9px] pl-[8px]">
            State
            <ChevronDown size={12} strokeWidth={2} />
          </div>
        </div>
      </div>
      <div className="ml-[1px] flex-1 pt-[7px]">
        <AreaHead
          className="pb-[2px]"
          label="Values"
          icon={<span className="font-['Liberation_Serif',serif] text-[17px] font-bold text-[#999]">Σ</span>}
        />
        <div className="h-[87px] bg-white pt-[2px] pl-[1px]">
          <div className="flex h-[26px] items-center border border-[#aaa] pl-[8px]">Sum of Sales</div>
        </div>
      </div>
    </div>
    <div className="mt-[25px] flex h-[31px] items-center pl-[9px]">
      <span className="h-[16px] w-[16px] shrink-0 rounded-[3px] border border-[#777] bg-white" />
      <span className="ml-[9px] w-[312px] shrink-0">Defer Layout Update</span>
      <div className="flex h-[31px] w-[60px] shrink-0 items-center border border-[#ddd] pl-[6px] text-[#b5cdb8]">Update</div>
    </div>
  </div>
);

const StatusBar = () => (
  <div className="flex h-[22px] items-center overflow-hidden bg-[#f3f3f3] text-[12.500px] text-[#333]">
    <span className="ml-[8px] w-[62px] shrink-0">Ready</span>
    <svg viewBox="0 0 20 20" className="h-[19px] w-[19px] shrink-0">
      <circle cx="8" cy="3" r="2" fill="none" stroke="#333" />
      <path d="M1 6l5 2v4l-3 7M15 6l-5 2v4l1 2M12 13l6 6M18 13l-6 6" stroke="#333" fill="none" />
    </svg>
    <span className="ml-[3px] w-[1449px] shrink-0 font-semibold">Accessibility: Investigate</span>
    <div className="flex h-[22px] w-[50px] shrink-0 items-center justify-center bg-[#dcdcdc]">
      <svg viewBox="0 0 16 16" className="h-[16px] w-[16px]">
        <path d="M1 1h14v14H1zM5.500 1v14M10.500 1v14M1 5.500h14M1 10.500h14" fill="none" stroke="#333" />
      </svg>
    </div>
    <div className="flex w-[50px] shrink-0 justify-center">
      <svg viewBox="0 0 16 16" className="h-[16px] w-[16px]">
        <path d="M1 1h14v14H1zM4.500 4h7v8h-7zM6 6.500h4M6 9h4" fill="none" stroke="#333" />
      </svg>
    </div>
    <div className="flex w-[50px] shrink-0 justify-center">
      <svg viewBox="0 0 16 16" className="h-[16px] w-[16px]">
        <path d="M1 1h14v14H1zM1 9h9V1M5.500 1v8" fill="none" stroke="#333" />
      </svg>
    </div>
    <Minus size={13} strokeWidth={1.200} className="ml-[5px] shrink-0" />
    <div className="ml-[6px] flex h-[12px] w-[124px] shrink-0 items-center">
      <div className="h-px w-[62px] bg-[#555]" />
      <div className="h-[14px] w-[5px] bg-[#666]" />
      <div className="h-px flex-1 bg-[#555]" />
    </div>
    <Plus size={13} strokeWidth={1.200} className="ml-[6px] shrink-0" />
    <span className="ml-[10px] shrink-0">100%</span>
  </div>
);

const Watermark = () => (
  <div className="pointer-events-none absolute top-[878px] left-[826px] flex w-[228px] flex-col items-center leading-none text-[#808080] opacity-[0.16]">
    <span className="font-['DejaVu_Sans',sans-serif] text-[65px] leading-[70px] font-bold">مستقل</span>
    <span className="font-['Liberation_Sans',sans-serif] text-[37px] leading-[38px] font-bold">mostaql.com</span>
  </div>
);

export default function App() {
  return (
    <div className="relative h-[1008px] w-[1881px] overflow-hidden bg-gradient-to-r from-[#e9f0e0] via-[#deece8] to-[#e6efdf] font-['Noto_Sans',sans-serif]">
      <TitleBar />
      <MenuBar />
      <Ribbon />
      <FormulaBar />
      <div className="mt-[9px] flex h-[723px]">
        <div className="flex w-[1477px] shrink-0 flex-col">
          <div className="flex">
            <Sheet />
            <VScroll />
          </div>
          <TabBar />
        </div>
        <PivotPane />
      </div>
      <StatusBar />
      <Watermark />
    </div>
  );
}
